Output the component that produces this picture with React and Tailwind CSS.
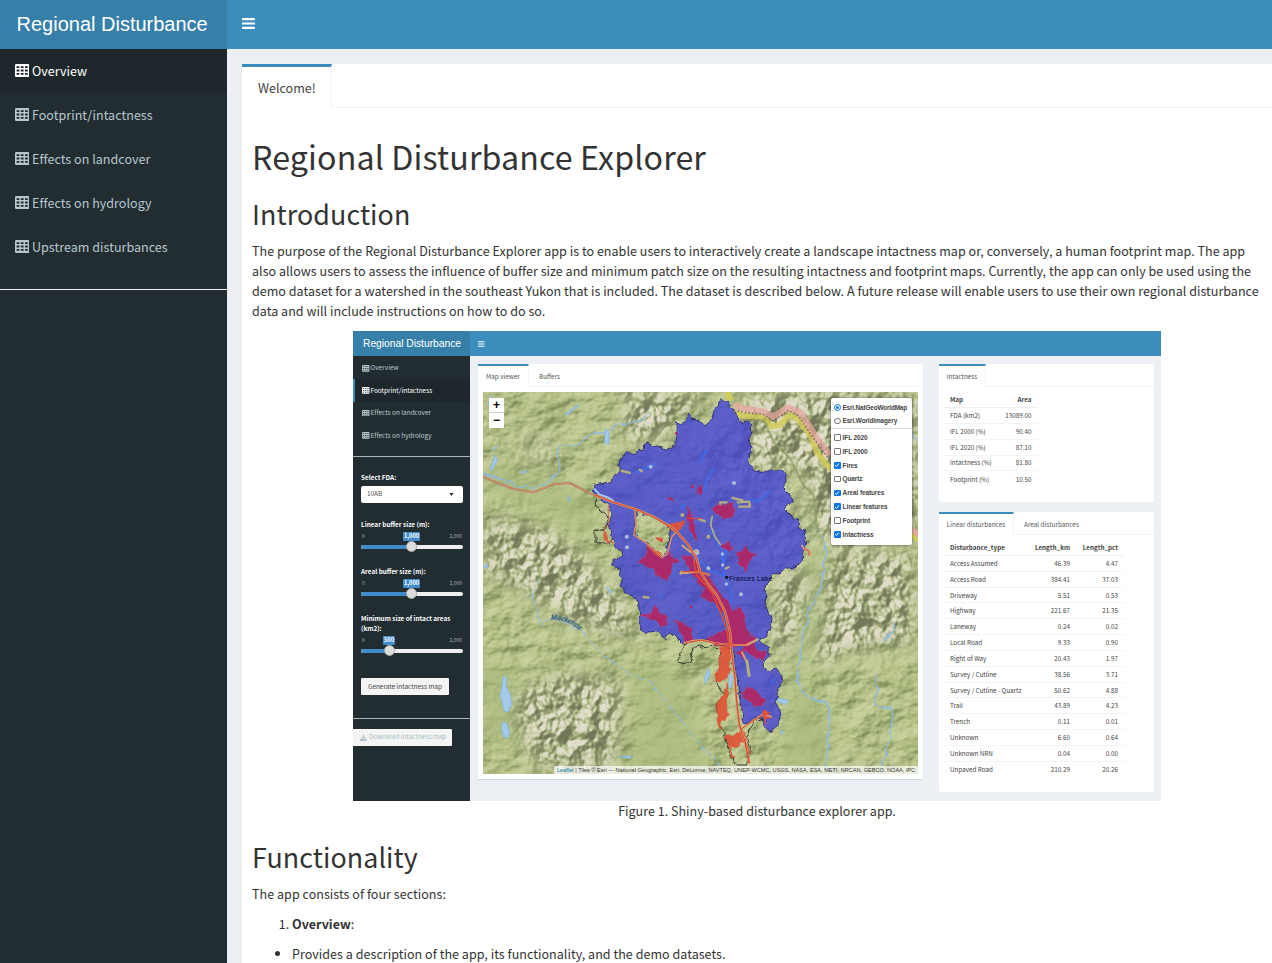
import React from "react";
import { FaDownload } from "react-icons/fa6";

const nav = ["Overview", "Footprint/intactness", "Effects on landcover", "Effects on hydrology", "Upstream disturbances"];
const miniNav = nav.slice(0, 4);

const intactness = [
  ["FDA (km2)", "13089.00"],
  ["IFL 2000 (%)", "90.40"],
  ["IFL 2020 (%)", "87.10"],
  ["Intactness (%)", "81.80"],
  ["Footprint (%)", "10.50"],
];

const linear = [
  ["Access Assumed", "46.39", "4.47"],
  ["Access Road", "384.41", "37.03"],
  ["Driveway", "5.51", "0.53"],
  ["Highway", "221.67", "21.35"],
  ["Laneway", "0.24", "0.02"],
  ["Local Road", "9.33", "0.90"],
  ["Right of Way", "20.43", "1.97"],
  ["Survey / Cutline", "38.56", "3.71"],
  ["Survey / Cutline - Quartz", "50.62", "4.88"],
  ["Trail", "43.89", "4.23"],
  ["Trench", "0.11", "0.01"],
  ["Unknown", "6.60", "0.64"],
  ["Unknown NRN", "0.04", "0.00"],
  ["Unpaved Road", "210.29", "20.26"],
];

const layers = [
  ["IFL 2020", false],
  ["IFL 2000", false],
  ["Fires", true],
  ["Quartz", false],
  ["Areal features", true],
  ["Linear features", true],
  ["Footprint", false],
  ["Intactness", true],
];

const watershed =
  "M725,38 745,55 760,75 762,92 775,100 785,118 800,112 812,118 812,150 808,175 816,190 810,215 805,240 825,258 850,262 870,255 895,255 918,270 918,292 910,310 925,325 942,345 925,360 915,375 935,395 955,405 955,425 975,440 978,470 975,485 965,500 968,520 950,545 920,550 905,565 880,570 860,585 850,610 862,630 855,650 865,680 876,700 872,735 865,750 840,758 845,775 868,790 866,815 850,830 850,845 870,860 890,855 905,872 910,890 893,905 895,930 885,950 900,975 900,1000 890,1020 872,1036 855,1025 850,1005 835,995 820,1000 805,1012 790,1018 785,1000 782,960 775,920 772,880 765,840 760,790 740,785 720,780 700,770 670,765 640,770 610,775 600,765 580,745 555,758 530,740 495,742 480,715 478,690 480,660 465,635 432,625 420,600 428,585 415,570 418,550 398,540 400,520 430,515 430,500 410,490 405,470 390,455 388,430 390,370 375,355 350,335 340,315 345,300 370,295 395,290 400,275 420,260 422,220 440,200 465,210 475,190 495,190 500,170 525,182 560,192 585,178 590,110 605,120 628,88 650,110 665,105 675,122 695,105 700,80 712,70 715,50Z M468,375 520,395 570,425 567,445 572,465 560,490 560,505 543,518 525,505 505,475 480,460 462,445 465,415Z";

function TableIcon({ className }) {
  return (
    <svg viewBox="0 0 14.4 13" className={className} fill="currentColor">
      <path
        fillRule="evenodd"
        d="M1.3 0H13.1A1.3 1.3 0 0 1 14.4 1.3V11.7A1.3 1.3 0 0 1 13.1 13H1.3A1.3 1.3 0 0 1 0 11.7V1.3A1.3 1.3 0 0 1 1.3 0Z M1.6 2.2V4H4.4V2.2Z M5.8 2.2V4H8.6V2.2Z M10 2.2V4H12.8V2.2Z M1.6 5.6V7.4H4.4V5.6Z M5.8 5.6V7.4H8.6V5.6Z M10 5.6V7.4H12.8V5.6Z M1.6 9V10.8H4.4V9Z M5.8 9V10.8H8.6V9Z M10 9V10.8H12.8V9Z"
      />
    </svg>
  );
}

function Bars({ className }) {
  return (
    <svg viewBox="0 0 13 11" className={className} fill="currentColor">
      <rect width="13" height="2.2" rx=".4" />
      <rect y="4.4" width="13" height="2.2" rx=".4" />
      <rect y="8.8" width="13" height="2.2" rx=".4" />
    </svg>
  );
}

function Terrain() {
  return (
    <svg className="block h-full w-full" viewBox="9 21 1305 1146" preserveAspectRatio="none">
      <defs>
        <filter id="plain" x="0" y="0" width="100%" height="100%" colorInterpolationFilters="sRGB">
          <feTurbulence type="fractalNoise" baseFrequency="0.009 0.012" numOctaves="4" seed="8" />
          <feColorMatrix values="0 0 0 0 0  0 0 0 0 0  0 0 0 0 0  1 0 0 0 0" />
          <feDiffuseLighting surfaceScale="20" diffuseConstant="1" lightingColor="#fff">
            <feDistantLight azimuth="225" elevation="48" />
          </feDiffuseLighting>
          <feComponentTransfer>
            <feFuncR type="table" tableValues="0.42 0.48 0.55 0.66 0.74 0.8" />
            <feFuncG type="table" tableValues="0.48 0.54 0.61 0.71 0.78 0.83" />
            <feFuncB type="table" tableValues="0.3 0.34 0.4 0.49 0.56 0.64" />
          </feComponentTransfer>
        </filter>
        <filter id="mountain" x="0" y="0" width="100%" height="100%" colorInterpolationFilters="sRGB">
          <feTurbulence type="fractalNoise" baseFrequency="0.02 0.017" numOctaves="3" seed="21" />
          <feColorMatrix values="0 0 0 0 0  0 0 0 0 0  0 0 0 0 0  1 0 0 0 0" />
          <feDiffuseLighting surfaceScale="42" diffuseConstant="1.05" lightingColor="#fff">
            <feDistantLight azimuth="225" elevation="48" />
          </feDiffuseLighting>
          <feComponentTransfer>
            <feFuncR type="table" tableValues="0.45 0.51 0.57 0.67 0.76 0.89" />
            <feFuncG type="table" tableValues="0.47 0.53 0.6 0.71 0.78 0.87" />
            <feFuncB type="table" tableValues="0.35 0.4 0.44 0.52 0.62 0.8" />
          </feComponentTransfer>
        </filter>
        <filter id="soft" x="-50%" y="-50%" width="200%" height="200%">
          <feGaussianBlur stdDeviation="26" />
        </filter>
        <filter id="ragged" x="-10%" y="-10%" width="120%" height="120%">
          <feTurbulence type="fractalNoise" baseFrequency="0.04" numOctaves="2" seed="4" />
          <feDisplacementMap in="SourceGraphic" scale="22" xChannelSelector="R" yChannelSelector="G" />
        </filter>
        <mask id="peaks">
          <g fill="#fff" filter="url(#soft)">
            <path d="M780,20 L1314,20 L1314,420 L1100,500 L1000,440 L980,260 L820,230Z" />
            <path d="M440,20 L690,20 L620,90 L520,170 L430,160Z" />
            <path d="M9,400 L200,430 L330,540 L420,640 L480,760 L300,720 L140,620 L9,560Z" />
            <path d="M60,960 L250,860 L430,900 L400,1150 L180,1150Z" />
            <path d="M880,590 L1010,540 L980,740 L890,830Z" />
            <path d="M1040,520 L1300,500 L1314,760 L1100,800 L1010,840Z" />
            <path d="M80,170 L220,120 L240,240 L120,250Z" opacity=".4" />
            <path d="M560,200 L800,120 L930,300 L960,500 L840,560 L780,330Z" opacity=".5" />
          </g>
        </mask>
      </defs>
      <rect x="9" y="21" width="1305" height="1146" filter="url(#plain)" />
      <g mask="url(#peaks)">
        <rect x="9" y="21" width="1305" height="1146" filter="url(#mountain)" />
      </g>
      <g fill="#abbb7e" filter="url(#soft)" opacity=".7">
        <path d="M430,820 L620,860 L700,1167 L440,1167 L480,980Z" />
        <path d="M9,230 L220,270 L330,330 L380,470 L200,390 L9,320Z" />
        <path d="M1000,480 L1050,520 L1010,740 L960,900 L1050,980 L1040,1167 L900,1167 L930,880Z" />
        <path d="M9,820 L110,860 L110,1060 L9,1100Z" />
      </g>

      <g fill="none" stroke="#8fb9e0" strokeWidth="4" strokeLinejoin="round" filter="url(#ragged)">
        <path d="M9,270 L60,278 L110,302 L160,308 L210,292 L240,250 L230,185 L290,182 L330,150 L370,140 L420,118 L480,108 L510,85" />
        <path d="M170,580 L160,640 L180,720 L215,700 L300,735 L360,800 L430,855 L510,890 L560,950 L600,1000 L650,1070 L700,1120 L740,1160" strokeWidth="3" />
        <path d="M1018,430 L1040,480 L1025,600 L990,680 L965,760 L950,890 L985,940 L1050,955 L1045,1060 L1035,1160" />
        <path d="M1245,715 L1215,770 M1185,870 L1190,920 L1180,955 L1235,975 L1230,1060 L1205,1140" />
        <path d="M1290,140 L1310,165 M20,60 L40,30 M35,200 L55,180" />
      </g>
      <g fill="#a3caea" stroke="#7fb0e0" strokeWidth="2">
        <path d="M70,872 80,880 78,905 90,925 95,955 85,980 72,978 66,950 60,930 66,905Z M68,1010 80,1015 88,1040 82,1060 70,1055 64,1030Z" />
        <path d="M376,130 388,145 386,180 374,172Z M255,88 296,58 294,64 260,90Z M45,210 52,225 34,260 32,248Z M890,940 925,945 918,958 895,952Z M685,850 690,870 676,898 673,880Z M748,862 758,875 755,905 746,910Z M415,1115 455,1113 450,1120Z M120,260 142,258 138,263 122,264Z M378,605 398,620 394,627Z M262,330 272,345 268,350Z M9,545 25,535 20,550Z M900,1045 910,1035 907,1050Z" />
      </g>

      <g fill="none" strokeLinejoin="round">
        <path d="M762,85 L790,92 L850,95 L875,125 L900,120 L930,88 L960,110 L990,150 L1010,200 L1040,240 L1075,270" stroke="#d2cb55" strokeWidth="18" opacity=".8" />
        <path d="M762,60 L790,70 L850,80 L880,95 L925,68 L960,82 L985,120 L1010,160 L1050,210" stroke="#e4a5a0" strokeWidth="20" opacity=".75" />
        <path d="M762,76 L800,84 L850,88 L880,108 L925,76 L955,92 L980,130 L1012,175 L1050,228" stroke="#6b6048" strokeWidth="4" strokeDasharray="4 7" />
        <path d="M740,22 L752,45" stroke="#d2cb55" strokeWidth="16" />
        <path d="M1290,430 L1314,450" stroke="#e4a5a0" strokeWidth="16" />
        <path d="M1294,446 L1314,468" stroke="#d2cb55" strokeWidth="10" />
        <path d="M850,100 L880,170 L930,220 L970,300 L1000,330 L1010,430" stroke="#8d9860" strokeWidth="7" opacity=".7" />
        <path d="M9,275 L50,292 L100,312 L160,322 L220,298 L270,294 L330,325 L400,352" stroke="#b66e58" strokeWidth="6" />
        <path d="M9,275 L50,292 L100,312 L160,322 L220,298 L270,294 L330,325 L400,352" stroke="#d9b193" strokeWidth="2" />
      </g>

      <g filter="url(#ragged)">
        <path d={watershed} fill="#3c3cda" fillOpacity=".74" fillRule="evenodd" stroke="#24246b" strokeWidth="2.5" strokeLinejoin="round" />
        <path d="M345,335 L350,365 L382,390 L384,420 L345,445 L345,470 L365,478 L400,465" fill="none" stroke="#303b30" strokeWidth="3" />
        <path d="M608,775 L605,800 L590,830 L625,838 L640,790 L700,780 L718,795 L722,840 L705,890 L735,930 L708,950 L715,1010 L735,1050 L750,1110 L770,1140 L800,1140 L808,1090 L800,1060 L818,1010 L850,1000" fill="none" stroke="#303b30" strokeWidth="3" />
      </g>

      <g fill="none" stroke="#3f6bea" strokeWidth="6" strokeLinejoin="round" opacity=".9">
        <path d="M700,250 L680,285 L668,330 M680,195 L655,235 M655,520 L690,555 L740,575 L755,630 L752,690 M460,265 L500,248 L530,235 M870,320 L840,345 L795,350 M740,490 L730,540 M620,355 L600,372 M625,410 L640,460" />
        <path d="M545,625 L540,640 M575,575 L585,555 M885,880 L875,895 M690,400 L695,440 L722,490 L732,570" />
      </g>
      <path d="M342,310 L358,328 L385,338 L402,350" fill="none" stroke="#a3caea" strokeWidth="6" />

      <g fill="none" stroke="#b4ad7c" strokeWidth="9" strokeLinejoin="round">
        <path d="M422,257 L452,264 M477,253 L488,260 M755,338 L790,347 M742,352 L720,352 L720,366 M770,352 L808,350 L810,365 L775,365 M600,568 L605,560 L622,565 M655,402 L677,410 M488,636 L508,638 M735,552 L748,545" strokeWidth="7" />
        <path d="M800,825 L808,875" />
        <path d="M697,392 L692,420 L705,455 L722,480" strokeWidth="5" />
      </g>
      <g fill="#a9bedb">
        <circle cx="512" cy="245" r="6" /><circle cx="762" cy="294" r="6" /><circle cx="607" cy="390" r="6" fill="#b4ad7c" /><circle cx="440" cy="455" r="6" />
        <circle cx="441" cy="487" r="6" /><circle cx="685" cy="455" r="6" fill="#b4ad7c" /><circle cx="727" cy="507" r="5" /><circle cx="649" cy="502" r="9" />
        <circle cx="728" cy="540" r="5" /><circle cx="739" cy="597" r="5" /><circle cx="783" cy="628" r="6" /><circle cx="685" cy="550" r="6" />
      </g>

      <g fill="#b32160" fillOpacity=".9" stroke="#bb4160" strokeWidth="1.5" filter="url(#ragged)">
        <path d="M697,375 710,355 735,362 762,352 768,375 755,395 730,402 715,388Z" />
        <path d="M648,322 668,300 671,328 660,334Z M632,297 643,295 638,307Z" />
        <path d="M620,400 626,356 636,410 648,440 650,470 640,465 625,420Z" />
        <path d="M475,530 500,518 500,488 520,505 540,520 560,515 572,500 575,522 595,525 575,545 562,592 545,578 530,575 520,550 495,545Z" />
        <path d="M720,480 745,470 760,490 745,500Z M762,505 785,500 797,482 808,498 828,510 808,530 798,558 780,530Z" />
        <path d="M610,510 635,510 650,540 690,575 705,610 745,655 765,680 775,665 790,690 800,740 825,760 800,780 760,780 745,730 725,680 700,650 665,630 670,610 640,570 625,545Z" />
        <path d="M480,690 515,685 525,660 540,685 560,690 562,720 545,722 525,705Z" />
        <path d="M585,712 605,715 630,730 640,765 620,775 605,745Z" />
        <path d="M680,765 715,745 745,735 755,780 715,782Z M780,790 820,765 835,795 862,800 850,825 820,820 800,800Z M765,800 790,795 782,822Z" />
        <path d="M778,928 795,922 800,905 830,920 835,935 857,948 850,960 820,958 800,940Z" />
      </g>
      <g fill="#df5536" fillOpacity=".92" filter="url(#ragged)">
        <path d="M718,785 748,780 752,820 750,860 740,880 720,895 697,890 712,860 720,830Z" />
        <path d="M738,895 748,920 740,950 748,990 725,1010 722,1040 712,1020 708,950 730,930Z" />
        <path d="M735,1052 765,1048 795,1040 798,1068 770,1085 755,1090 765,1125 755,1120 745,1080Z" />
        <path d="M565,420 590,415 610,405 605,430 590,440 572,438Z M528,455 550,460 545,475 532,468Z M368,435 378,440 382,475 372,465Z" />
        <path d="M500,485 525,492 545,500 540,518 520,505Z M840,985 862,975 870,1000 855,1005Z" />
      </g>

      <g fill="none" strokeLinejoin="round">
        <path d="M345,330 L400,352 L465,372 L520,395 L570,425 L590,440 L625,480 L650,520 L660,560 L680,590 L710,630 L735,680 L750,740 L755,800 L765,880 L770,950 L778,1020 L795,1070 L808,1135" stroke="#c9a27a" strokeWidth="7.5" />
        <path d="M465,372 L468,420 L462,450 L500,475 L545,518 L562,505 L575,455 L590,440" stroke="#cda27c" strokeWidth="5" />
        <path d="M465,372 L468,420 L462,450 L500,475 L545,518 L562,505 L575,455 L590,440" stroke="#dd6548" strokeWidth="2" />
        <path d="M385,360 L385,420 L372,430 L376,465 L405,475" stroke="#d06a50" strokeWidth="3" />
        <path d="M605,480 L630,500 L655,500 M600,565 L655,560 L690,570 M610,775 L640,767 L665,765 L705,775 L755,780 L800,780 L835,762 M785,800 L800,830 M780,1035 L810,1015 L845,990 L875,995" stroke="#cfa678" strokeWidth="6" />
        <path d="M345,330 L400,352 L465,372 L520,395 L570,425 L590,440 L625,480 L650,520 L660,560 L680,590 L710,630 L735,680 L750,740 L755,800 L765,880 L770,950 L778,1020 L795,1070 L808,1135" stroke="#ea4428" strokeWidth="3.5" />
        <path d="M640,520 L650,570 L695,620 L725,690 L742,740 L748,800" stroke="#ee4a24" strokeWidth="4" />
        <path d="M610,775 L665,765 L705,775 L755,780 L800,780 M605,560 L655,560 L690,570 M620,400 L665,400 M780,1035 L810,1012 L850,990 L875,1000 M850,975 L858,1020 M838,995 L872,982 M795,1070 L812,1108 M500,480 L545,518" stroke="#e8482c" strokeWidth="3" />
        <path d="M965,480 L972,492 L988,497 L992,510 L983,508" stroke="#d9a384" strokeWidth="5" />
        <path d="M972,490 L988,500 L986,512" stroke="#e8482c" strokeWidth="3" />
        <path d="M585,145 L592,145 M562,338 L580,345 M632,662 L634,670" stroke="#b02a50" strokeWidth="6" />
      </g>

      <text x="748" y="588" fontSize="19" fontFamily="Liberation Sans, sans-serif" fill="#16164d" stroke="#16164d" strokeWidth=".5" textLength="128">Frances Lake</text>
      <circle cx="740" cy="577" r="5" fill="#15152b" />
      <path id="river" d="M213,705 Q260,700 304,740" fill="none" />
      <text fontSize="22" fontStyle="italic" fontFamily="Liberation Serif, serif" fill="#2b5b88" stroke="#2b5b88" strokeWidth=".8">
        <textPath href="#river">Mackenzie</textPath>
      </text>
    </svg>
  );
}

function LayerControl() {
  return (
    <div className="absolute top-[6px] right-[6px] h-[147px] w-[81px] rounded-[2px] bg-white pt-[2.5px] font-['Liberation_Sans',sans-serif] text-[6.4px] font-bold text-[#444] shadow-[0_0_3px_rgba(0,0,0,.55)]">
      <div className="flex h-[13.7px] items-center gap-[2px] pl-[3px]">
        <span className="flex size-[6.5px] items-center justify-center rounded-full border border-[#0b76e8] bg-white">
          <span className="size-[3.5px] rounded-full bg-[#0b76e8]" />
        </span>
        <span className="tracking-[-0.15px] whitespace-nowrap">Esri.NatGeoWorldMap</span>
      </div>
      <div className="flex h-[13.7px] items-center gap-[2px] pl-[3px]">
        <span className="size-[6.5px] rounded-full border border-[#767676] bg-white" />
        <span className="tracking-[-0.1px] whitespace-nowrap">Esri.WorldImagery</span>
      </div>
      <div className="mb-[2px] h-px bg-[#ddd]" />
      {layers.map(([name, on]) => (
        <div key={name} className="flex h-[13.8px] items-center gap-[2px] pl-[3px]">
          {on ? (
            <span className="flex size-[6.6px] items-center justify-center rounded-[1px] bg-[#0b76e8]">
              <svg viewBox="0 0 10 10" className="size-[6px]">
                <path d="M2 5.2 L4.2 7.5 L8 2.6" fill="none" stroke="#fff" strokeWidth="1.6" />
              </svg>
            </span>
          ) : (
            <span className="size-[6.6px] rounded-[1px] border border-[#767676] bg-white" />
          )}
          <span className="tracking-[-0.07px] whitespace-nowrap">{name}</span>
        </div>
      ))}
    </div>
  );
}

function MapView() {
  return (
    <div className="relative h-[382px] w-[435px] overflow-hidden">
      <Terrain />
      <div className="absolute top-[6px] left-[6px] w-[15px] rounded-[1px] bg-white text-center font-['Liberation_Sans',sans-serif] text-[12px] font-bold text-black">
        <div className="h-[15px] border-b border-[#ccc] leading-[15px]">+</div>
        <div className="h-[15px] leading-[15px]">−</div>
      </div>
      <LayerControl />
      <div className="absolute right-0 bottom-0 h-[8px] w-[364px] bg-white/70 pl-[3px] font-['Liberation_Sans',sans-serif] text-[5.6px] leading-[8px] whitespace-nowrap text-[#333]">
        <span className="text-[#0078a8]">Leaflet</span> | Tiles © Esri — National Geographic, Esri, DeLorme, NAVTEQ, UNEP-WCMC, USGS, NASA, ESA, METI, NRCAN, GEBCO, NOAA, iPC
      </div>
    </div>
  );
}

function Slider({ label, value, tall, low }) {
  return (
    <div className={tall ? "h-[60px]" : "h-[47px]"}>
      <div className={tall ? "h-[20px] leading-[10px] font-bold text-white" : "h-[10px] leading-[10px] font-bold text-white"}>{label}</div>
      <div className="relative mt-[2px] flex h-[9px] items-center justify-between px-[1px] text-[5px] text-[#aab]">
        <span>0</span>
        <span>2,000</span>
        <span
          className={
            low
              ? "absolute top-[0.5px] left-[22px] h-[9px] w-[12px] rounded-[1px] bg-[#428bca] text-center text-[5.6px] leading-[9px] font-bold text-white"
              : "absolute top-[0.5px] left-[42px] h-[9px] w-[17px] rounded-[1px] bg-[#428bca] text-center text-[5.6px] leading-[9px] font-bold text-white"
          }
        >
          {value}
        </span>
      </div>
      <div className="relative mt-[4px] h-[4px] rounded-full bg-[#eee]">
        <div className={low ? "h-[4px] w-[28px] rounded-full bg-[#428bca]" : "h-[4px] w-[51px] rounded-full bg-[#428bca]"} />
        <div
          className={
            low
              ? "absolute top-[-3.5px] left-[22.5px] size-[11px] rounded-full border border-[#aaa] bg-[#ddd]"
              : "absolute top-[-3.5px] left-[45px] size-[11px] rounded-full border border-[#aaa] bg-[#ddd]"
          }
        />
      </div>
    </div>
  );
}

function MiniSidebar() {
  return (
    <div className="w-[117px] bg-[#222d32] pt-px text-[6.4px] text-[#b8c7ce]">
      {miniNav.map((n, i) => (
        <div
          key={n}
          className={
            i === 1
              ? "flex h-[22.4px] items-center gap-[1px] border-l-2 border-[#3c8dbc] bg-[#1e282c] pl-[7px] text-white"
              : "flex h-[22.4px] items-center gap-[1px] pl-[9px]"
          }
        >
          <TableIcon className="h-[6.7px] w-[7.5px]" />
          <span className="tracking-[0.02px] whitespace-nowrap">{n}</span>
        </div>
      ))}
      <div className="mt-[9px] h-px bg-[#aeb3b5]" />
      <div className="pt-[16.5px] pr-[7px] pl-[8px]">
        <div className="h-[12.5px] leading-[10px] font-bold text-white">Select FDA:</div>
        <div className="flex h-[17px] items-center justify-between rounded-[2px] bg-white pr-[9px] pl-[6px] text-[#555]">
          <span>10AB</span>
          <svg viewBox="0 0 6 4" className="h-[3px] w-[5px]">
            <path d="M0 0h6L3 4z" fill="#333" />
          </svg>
        </div>
        <div className="h-[17px]" />
        <Slider label="Linear buffer size (m):" value="1,000" />
        <Slider label="Areal buffer size (m):" value="1,000" />
        <Slider
          tall
          low
          label={
            <>
              Minimum size of intact areas
              <br />
              (km2):
            </>
          }
          value="500"
        />
        <div className="mt-[4px] h-[17px] w-[88px] rounded-[1px] bg-[#f4f4f4] text-center leading-[17px] whitespace-nowrap text-[#444]">Generate intactness map</div>
      </div>
      <div className="mt-[23px] h-px bg-[#aeb3b5]" />
      <div className="mt-[10px] flex h-[17px] w-[99px] items-center gap-[2px] rounded-r-[1px] bg-[#f4f4f4] pl-[7px] whitespace-nowrap text-[#a9bcc5]">
        <FaDownload className="size-[7px]" />
        <span>Download intactness map</span>
      </div>
    </div>
  );
}

function Tabs({ active, other, width }) {
  return (
    <div className="flex h-[23px] text-[6.4px] text-[#555]">
      <div className={"border-t-2 border-r border-t-[#3c8dbc] border-r-[#f4f4f4] text-center leading-[22px] whitespace-nowrap " + width}>{active}</div>
      <div className="flex-1 border-b border-[#f4f4f4] pl-[10px] leading-[25px]">{other}</div>
    </div>
  );
}

function Figure() {
  return (
    <div className="flex h-[470px] w-[808px] flex-col overflow-hidden">
      <div className="flex h-[25px] shrink-0">
        <div className="w-[117px] bg-[#367fa9] pl-[10px] font-['Liberation_Sans',sans-serif] text-[10.25px] leading-[25px] whitespace-nowrap text-white">Regional Disturbance</div>
        <div className="flex flex-1 items-center bg-[#3c8dbc] pl-[8px] text-white">
          <Bars className="h-[6px] w-[6.5px]" />
        </div>
      </div>
      <div className="flex flex-1 bg-[#ecf0f5]">
        <MiniSidebar />
        <div className="mt-[8px] ml-[8px] h-[415px] w-[445px] bg-white shadow-[0_1px_1px_rgba(0,0,0,.1)]">
          <Tabs active="Map viewer" other="Buffers" width="w-[51px]" />
          <div className="pt-[5px] pl-[5px]">
            <MapView />
          </div>
        </div>
        <div className="mt-[8px] ml-[16px] w-[215px] text-[6.3px] text-[#444]">
          <div className="h-[138px] rounded-[2px] bg-white">
            <Tabs active="Intactness" other="" width="w-[47px]" />
            <div className="mt-[5px] ml-[5px] w-[93.5px]">
              <div className="flex h-[16px] items-center justify-between border-b border-[#eee] px-[6px] font-bold">
                <span>Map</span>
                <span>Area</span>
              </div>
              {intactness.map(([a, b], i) => (
                <div key={a} className={"flex h-[15.85px] items-center justify-between px-[6px] pt-[0.5px] " + (i < 4 ? "border-b border-[#f4f4f4]" : "")}>
                  <span>{a}</span>
                  <span>{b}</span>
                </div>
              ))}
            </div>
          </div>
          <div className="mt-[10px] h-[280px] rounded-[2px] bg-white">
            <Tabs active="Linear disturbances" other="Areal disturbances" width="w-[75px]" />
            <div className="mt-[5px] ml-[5px] w-[180px]">
              <div className="flex h-[16px] items-center border-b border-[#eee] px-[6px] font-bold">
                <span className="flex-1">Disturbance_type</span>
                <span className="w-[48px] text-right">Length_km</span>
                <span className="w-[48px] text-right">Length_pct</span>
              </div>
              {linear.map(([a, b, c], i) => (
                <div key={a} className={"flex h-[15.83px] items-center px-[6px] pt-[0.5px] " + (i < 13 ? "border-b border-[#f4f4f4]" : "")}>
                  <span className="flex-1 whitespace-nowrap">{a}</span>
                  <span className="w-[48px] text-right">{b}</span>
                  <span className="w-[48px] text-right">{c}</span>
                </div>
              ))}
            </div>
          </div>
        </div>
      </div>
    </div>
  );
}

export default function App() {
  return (
    <div className="flex h-[963px] w-[1272px] flex-col overflow-hidden bg-[#ecf0f5] font-['Noto_Sans_CJK_SC',sans-serif] text-[12.53px] text-[#333]">
      <header className="flex h-[49px] shrink-0">
        <div className="w-[227px] bg-[#367fa9] pl-[16.5px] font-['Liberation_Sans',sans-serif] text-[20px] leading-[48px] whitespace-nowrap text-white">Regional Disturbance</div>
        <div className="flex flex-1 bg-[#3c8dbc] pt-[18px] pl-[15px] text-white">
          <Bars className="h-[11px] w-[13px]" />
        </div>
      </header>
      <div className="flex min-h-0 flex-1">
        <aside className="w-[227px] shrink-0 bg-[#222d32] text-[#b8c7ce]">
          {nav.map((n, i) => (
            <div key={n} className={"flex h-[44px] items-center gap-[2.6px] pl-[15px] " + (i === 0 ? "bg-[#1e282c] text-white" : "")}>
              <TableIcon className="mb-[1px] h-[13px] w-[14.4px]" />
              <span className="tracking-[0.035px] whitespace-nowrap">{n}</span>
            </div>
          ))}
          <div className="mt-[20px] h-px bg-[#eee]" />
        </aside>
        <main className="mt-[15px] ml-[15px] w-[1030px] shrink-0 bg-white shadow-[0_1px_1px_rgba(0,0,0,.1)]">
          <div className="flex h-[44px]">
            <div className="w-[90px] border-t-[3px] border-r border-t-[#3c8dbc] border-r-[#f4f4f4] pl-[16px] leading-[42px] text-[#444]">Welcome!</div>
            <div className="flex-1 border-b border-[#f4f4f4]" />
          </div>
          <div className="px-[10px] whitespace-nowrap">
            <h1 className="mt-[28px] h-[40px] text-[32.2px] leading-[40px] tracking-[0.12px]">Regional Disturbance Explorer</h1>
            <h2 className="mt-[21px] h-[33px] text-[26.85px] leading-[33px] tracking-[0.1px]">Introduction</h2>
            <p className="mt-[11px] leading-[20px]">
              <span className="block tracking-[0.035px]">The purpose of the Regional Disturbance Explorer app is to enable users to interactively create a landscape intactness map or, conversely, a human footprint map. The app</span>
              <span className="block tracking-[0.025px]">also allows users to assess the influence of buffer size and minimum patch size on the resulting intactness and footprint maps. Currently, the app can only be used using the</span>
              <span className="block tracking-[0.03px]">demo dataset for a watershed in the southeast Yukon that is included. The dataset is described below. A future release will enable users to use their own regional disturbance</span>
              <span className="block tracking-[0.035px]">data and will include instructions on how to do so.</span>
            </p>
            <div className="mt-[10px] flex flex-col items-center">
              <Figure />
              <div className="h-[20px] leading-[20px] tracking-[0.02px]">Figure 1. Shiny-based disturbance explorer app.</div>
            </div>
            <h2 className="mt-[19px] h-[33px] text-[26.85px] leading-[33px] tracking-[0.08px]">Functionality</h2>
            <p className="mt-[11px] leading-[20px] tracking-[0.04px]">The app consists of four sections:</p>
            <ol className="mt-[10px] list-decimal pl-[40px] leading-[20px]">
              <li>
                <b>Overview</b>:
              </li>
            </ol>
            <ul className="mt-[10px] list-disc pl-[40px] leading-[20px]">
              <li className="tracking-[0.035px]">Provides a description of the app, its functionality, and the demo datasets.</li>
            </ul>
          </div>
        </main>
      </div>
    </div>
  );
}
